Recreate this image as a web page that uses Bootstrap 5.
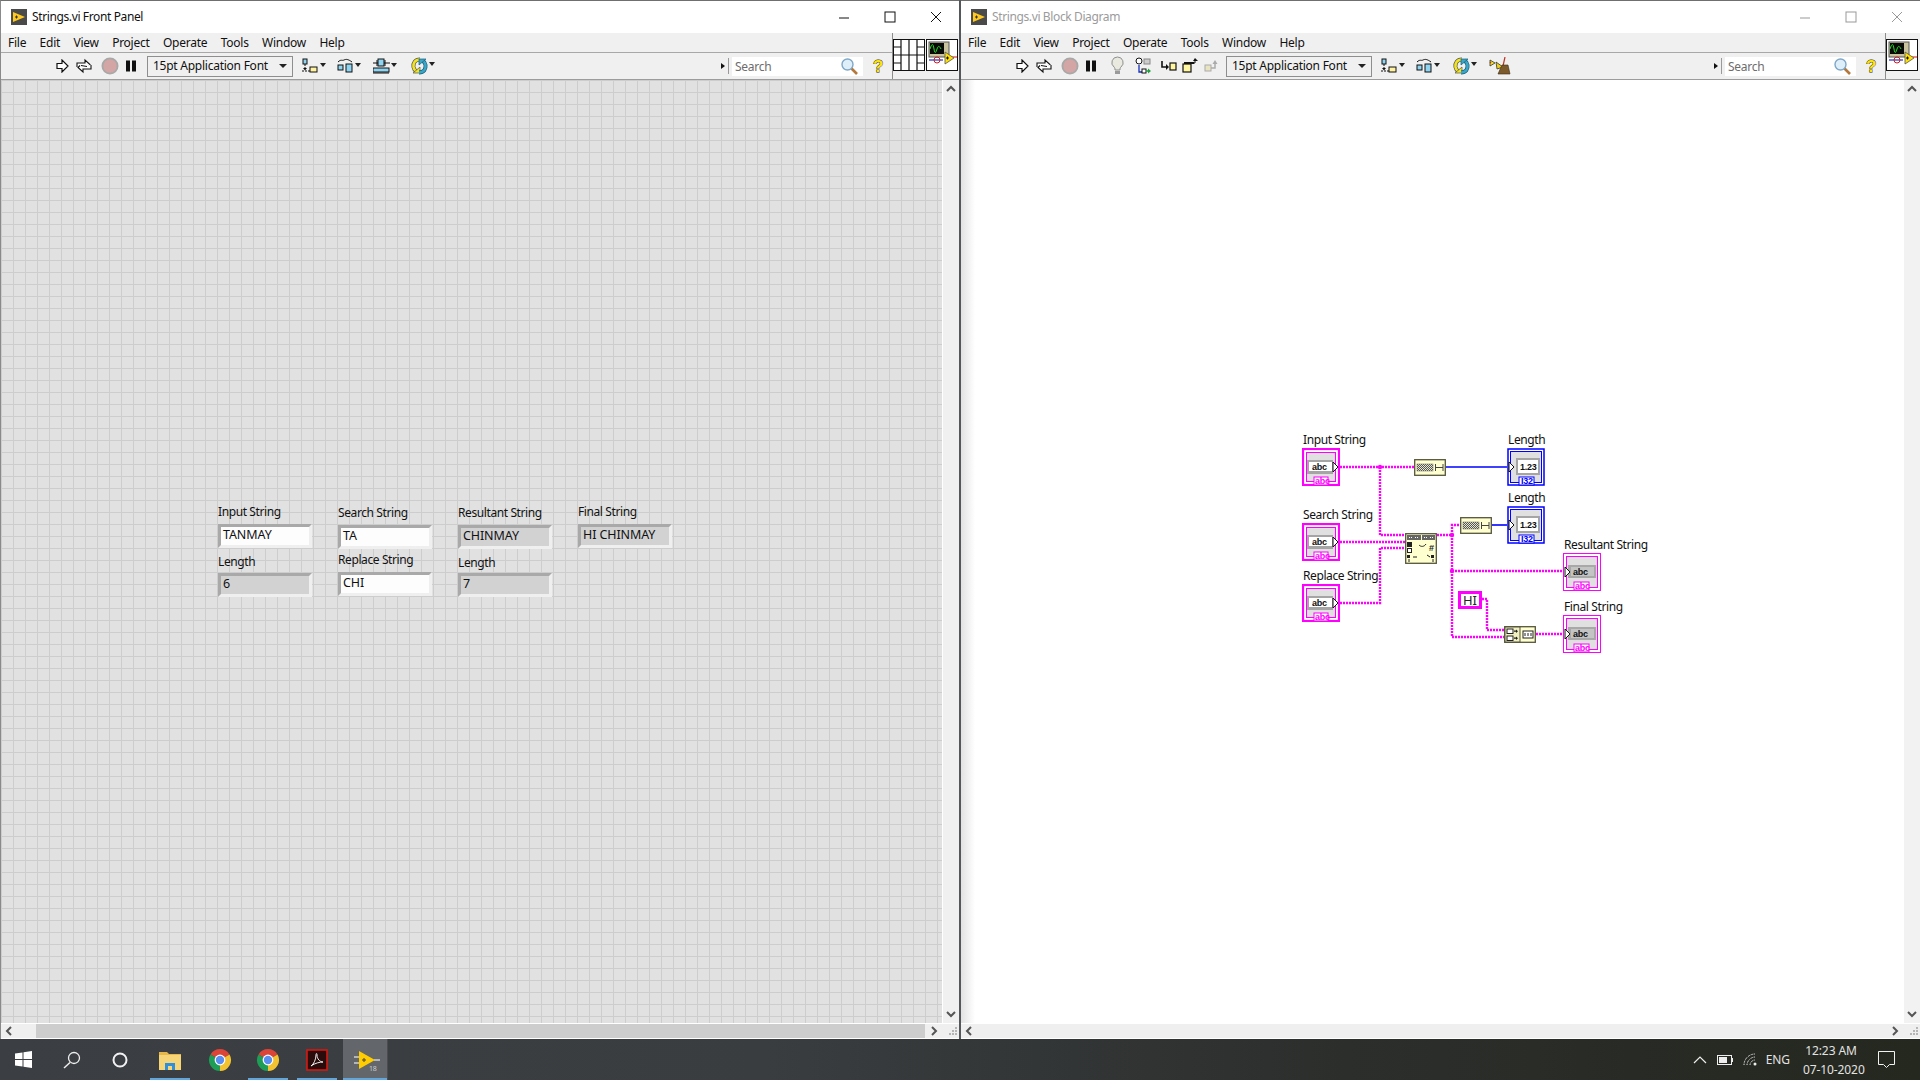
<!DOCTYPE html>
<html lang="en">
<head>
<meta charset="utf-8">
<title>Strings.vi</title>
<link href="https://cdn.jsdelivr.net/npm/bootstrap@5.3.0/dist/css/bootstrap.min.css" rel="stylesheet">
<style>
html,body{margin:0;height:1080px;width:1920px;overflow:hidden;background:#fff;}
body{font-family:"Noto Sans","Open Sans",sans-serif;font-size:12px;color:#111;letter-spacing:-.25px;}
.sprite{position:absolute;width:0;height:0;}
.desk{height:1039px;}
.lv-win{height:1039px;border-top:1px solid #6f6f6f;background:#f0f0f0;}
.win-a{width:959px;border-left:1px solid #8a8a8a;}
.win-b{width:959px;}
.split{width:2px;height:1039px;background:#55585a;}
.ttl{height:32px;background:#fff;padding-left:10px;font-size:12px;letter-spacing:-.38px;}
.ttl .ttl-txt{margin-left:5px;}
.dim{color:#9b9b9b;}
.wbtn{width:46px;text-align:center;}
.wbtn svg{display:block;margin:auto;}
.hdr{height:46px;}
.menu-row{height:20px;background:#f0f0f0;border-bottom:1px solid #a8a8a8;padding-left:7px;gap:13.4px;line-height:19px;}
.tool-row{height:26px;background:#f0f0f0;padding-left:55px;padding-right:7px;}
.pane-box{border-left:1px solid #8c8c8c;background:#f0f0f0;padding-top:6px;}
.pane-a{width:67px;}
.pane-b{width:35px;}
.hdr-line{height:1px;background:#9c9c9c;}
.font-pick{height:21px;border:1px solid #8e8e8e;background:#f0f0f0;padding:0 5px 0 5px;line-height:18px;}
.w146{width:146px;}
.search-box{height:19px;width:131px;background:#fff;color:#6d6d6d;padding-left:3px;line-height:18px;margin-top:1px;}
.me5{margin-right:5px}
.me2px{margin-right:2px}
.mid{flex:1 1 auto;min-height:0;}
.canvas-a{position:relative;background-color:#e1e1e1;
 background-image:linear-gradient(#cdcdcd 1px,transparent 1px),linear-gradient(90deg,#cdcdcd 1px,transparent 1px);
 background-size:12px 12px;background-position:0 0;}
.canvas-b{position:relative;background:linear-gradient(90deg,#e2e2e2,#fff 14px);}
.vbar{width:17px;background:#f0f0f0;border-left:1px solid #fff;padding:5px 0;}
.vbar-b{background:#f2f2f2;}
.hbar{height:16px;background:#efefef;border-top:1px solid #fff;border-bottom:1px solid #fff;}
.hbar-end{width:35px;}
.hbar-thumb{background:#cdcdcd;width:889px;height:100%;}
.lbl{position:absolute;white-space:nowrap;line-height:16px;letter-spacing:-.4px;}
.fld{position:absolute;width:94px;height:24px;border:3px solid;border-color:#a9a9a9 #efefef #efefef #a9a9a9;padding-left:2px;font-size:12.5px;line-height:15px;white-space:nowrap;letter-spacing:-.1px;}
.f-w{background:#fdfdfd;}
.f-g{background:#d2d2d2;}
.x1{left:217px}.x2{left:337px}.x3{left:457px}.x4{left:577px}
.ly1{top:424px}.ly2{top:425px}.ly3{top:474px}.ly4{top:472px}.ly5{top:475px}
.fy1{top:444px}.fy2{top:445px}.fy3{top:493px}.fy4{top:492px}
.diagram{position:absolute;left:329px;top:345px;width:380px;height:240px;}
.diagram text{font-family:"Noto Sans",sans-serif;}
.t-lab{font-size:12px;fill:#111;letter-spacing:-.4px;}
.t-mono{font-family:"Liberation Sans",sans-serif !important;font-size:9px;font-weight:700;}
.taskbar{height:41px;background:linear-gradient(90deg,#3b3e42 0,#3a3d40 40%,#2b2e2b 70%,#25281f 100%);color:#e2e2e2;position:relative;}
.tb-item{width:48px;height:41px;position:relative;}
.tb-start{width:46px;}
.tb-item.act{width:45px;padding-left:3px;background:#63666a;border-right:1px solid #4a4c50;}
.tb-under::after{content:"";position:absolute;left:4px;right:4px;bottom:0;height:2px;background:#63a6dc;}
.act.tb-under::after{left:0;right:0;}
.tray{font-size:12px;letter-spacing:-.1px;}
.clock{text-align:center;line-height:19px;width:56px;white-space:nowrap;}
.ms1px{margin-left:1px}.ms2{margin-left:2px}.ms5{margin-left:5px}.ms6{margin-left:6px}.ms7{margin-left:7px}.ms8{margin-left:8px}.ms9{margin-left:9px}.ms10{margin-left:10px}.ms11{margin-left:11px}.ms12{margin-left:12px}.ms13{margin-left:13px}.ms14{margin-left:14px}.ms19{margin-left:19px}
.tray-end{width:25px}
.qmark{font:700 17px "Liberation Sans",sans-serif;fill:#ffe600;stroke:#222;stroke-width:.8;paint-order:stroke;}
</style>
</head>
<body>
<svg class="sprite" aria-hidden="true">
<defs>
<pattern id="hatch" width="2" height="2" patternUnits="userSpaceOnUse"><rect width="2" height="2" fill="#e8e8d0"/><rect width="1" height="1" fill="#555"/><rect x="1" y="1" width="1" height="1" fill="#555"/></pattern>
<symbol id="i-run" viewBox="0 0 13 14"><polygon points="1,4.5 6,4.5 6,1 12,7 6,13 6,9.5 1,9.5" fill="#fff" stroke="#111" stroke-width="1.2"/></symbol>
<symbol id="i-rc" viewBox="0 0 18 16"><path d="M2 9V5h8V2l5 4.5-2 2" fill="#fff" stroke="#111" stroke-width="1.1"/><path d="M16 7v4H8v3L3 9.5l2-2" fill="#fff" stroke="#111" stroke-width="1.1"/><path d="M6 7.5l6 1" stroke="#111"/></symbol>
<symbol id="i-abort" viewBox="0 0 18 18"><circle cx="9" cy="9" r="7.6" fill="#d3a5a5" stroke="#a8a8a8" stroke-width="1.8"/></symbol>
<symbol id="i-pause" viewBox="0 0 10 12"><rect width="4" height="11" y=".5" fill="#111"/><rect x="6" y=".5" width="4" height="11" fill="#111"/></symbol>
<symbol id="i-bulb" viewBox="0 0 15 20"><path d="M7.5 1a5.6 5.6 0 0 0-3.500 10c.8.7 1 1.500 1 3h5c0-1.500.2-2.300 1-3a5.600 5.600 0 0 0-3.500-10z" fill="#e9e9e0" stroke="#8e8e8e"/><rect x="5" y="15" width="5" height="3" fill="#9a9a9a"/></symbol>
<symbol id="i-retain" viewBox="0 0 16 18"><circle cx="4" cy="4" r="3" fill="#fff" stroke="#111"/><rect x="9" y="2" width="6" height="5" fill="#ccc" stroke="#888"/><path d="M4 8v7h4" fill="none" stroke="#1230c0" stroke-width="1.300"/><rect x="7" y="12" width="4" height="4" fill="#fff" stroke="#111"/><path d="M11 14h3" stroke="#22a040" stroke-width="1.500"/><path d="M13 11.500l3 2.500-3 2.500z" fill="#22a040"/></symbol>
<symbol id="i-into" viewBox="0 0 16 14"><path d="M1 2v6h5" fill="none" stroke="#111" stroke-width="1.600"/><path d="M5 5l3 3-3 3z" fill="#111"/><rect x="9" y="4" width="6" height="7" fill="#fff6a0" stroke="#111" stroke-width="1.200"/></symbol>
<symbol id="i-over" viewBox="0 0 16 16"><rect x="1" y="6" width="8" height="8" fill="#fff6a0" stroke="#111" stroke-width="1.200"/><rect x="2" y="4" width="10" height="2" fill="#111"/><path d="M12 5h1V2" stroke="#111" fill="none"/><path d="M11 3l2-3 3 3z" fill="#111"/></symbol>
<symbol id="i-out" viewBox="0 0 16 14"><rect x="1" y="6" width="6" height="6" fill="#e9e4c0" stroke="#aaa"/><path d="M7 9h4V4" fill="none" stroke="#aaa" stroke-width="1.500"/><path d="M8.500 5l2.500-4 2.500 4z" fill="#aaa"/></symbol>
<symbol id="i-align" viewBox="0 0 24 16"><rect x="1" y="1" width="4" height="5" fill="#8fd4f0" stroke="#111"/><path d="M3 6v6M0 13h15" stroke="#111" stroke-dasharray="2 1"/><path d="M1 10l2 2.500L5 10z" fill="#111"/><rect x="8" y="9" width="7" height="5" fill="#fff2a0" stroke="#111"/><path d="M18 5h6l-3 4z" fill="#222"/></symbol>
<symbol id="i-dist" viewBox="0 0 24 16"><path d="M1 4c3-3 4-1 6-2s4-1 8 2" fill="none" stroke="#111"/><rect x="1" y="7" width="5" height="5" fill="#8fd4f0" stroke="#111"/><rect x="9" y="6" width="6" height="8" fill="#8fd4f0" stroke="#111"/><path d="M18 5h6l-3 4z" fill="#222"/></symbol>
<symbol id="i-size" viewBox="0 0 24 16"><path d="M0 5h5M11 5h6M4 2v6M12 2v6" stroke="#111"/><rect x="5" y="1" width="6" height="7" fill="#8fd4f0" stroke="#111"/><rect x="0" y="10" width="16" height="4" fill="#8fd4f0" stroke="#111"/><path d="M0 15h16" stroke="#111"/><path d="M18 5h6l-3 4z" fill="#222"/></symbol>
<symbol id="i-reorder" viewBox="0 0 24 18"><path d="M9 2.500C4 2.500 2 6 2.500 10c.3 2 1.500 3.500 3 4.500" fill="none" stroke="#555" stroke-width="4"/><path d="M9 2.500C4 2.500 2 6 2.500 10c.3 2 1.500 3.500 3 4.500" fill="none" stroke="#f4e41e" stroke-width="2.600"/><path d="M2 16h7v-6z" fill="#f4e41e" stroke="#555" stroke-width=".7"/><path d="M8 15.500c5 0 7-3.500 6.500-7.500-.3-2-1.500-3.500-3-4.500" fill="none" stroke="#1a5f78" stroke-width="4"/><path d="M8 15.500c5 0 7-3.500 6.500-7.500-.3-2-1.500-3.500-3-4.500" fill="none" stroke="#3aa6c8" stroke-width="2.600"/><path d="M15 2H8v6z" fill="#3aa6c8" stroke="#1a5f78" stroke-width=".7"/><path d="M18 5h6l-3 4z" fill="#222"/></symbol>
<symbol id="i-clean" viewBox="0 0 22 18"><path d="M1 3l5 3-5 3z" fill="#f0e020" stroke="#333" stroke-width=".8"/><path d="M7 5l7 5-6 2z" fill="#f0d010" stroke="#333" stroke-width=".8"/><path d="M1 5l1 1M16 0l-2 9" stroke="#c03020" stroke-width="1.200"/><path d="M13 8l6 0 2 9H9z" fill="#7c5a2c" stroke="#3c2a12" stroke-width=".6"/></symbol>
<symbol id="i-mag" viewBox="0 0 17 17"><path d="M10 10l6 6" stroke="#b5773a" stroke-width="2.600"/><circle cx="6.500" cy="6.500" r="5.500" fill="#dfeffa" stroke="#7fa8c8" stroke-width="1.400"/></symbol>
<symbol id="i-help" viewBox="0 0 13 18"><text x="1" y="15" class="qmark">?</text></symbol>
<symbol id="i-tri" viewBox="0 0 9 16"><path d="M0 5l4 3-4 3z" fill="#111"/><path d="M7.500 0v16" stroke="#9a9a9a"/></symbol>
<symbol id="i-conn" viewBox="0 0 32 32"><rect x=".5" y=".5" width="31" height="31" fill="#fff" stroke="#111"/><path d="M8 1v30M16 1v30M24 1v30M1 8h7M1 16h7M1 24h7M24 8h7M24 16h7M24 24h7M8 16h16" stroke="#111" stroke-width="1.200" fill="none"/></symbol>
<symbol id="i-vi" viewBox="0 0 32 32"><rect x=".5" y=".5" width="31" height="31" fill="#fff" stroke="#111"/><rect x="3" y="3" width="20" height="15" fill="#c9c3a0" stroke="#555"/><rect x="4" y="4" width="14" height="11" fill="#0a0a0a"/><path d="M4 10c2-6 3-6 4 0s2 3 3 0 2-4 4 0" stroke="#1ee01e" fill="none"/><path d="M3 21h14" stroke="#1e30d0" stroke-width="1.200"/><circle cx="11" cy="21" r="3" fill="none" stroke="#d02020"/><path d="M19 18h12" stroke="#e01010"/><path d="M19 13l9 6-9 6z" fill="#ffe000" stroke="#555" stroke-width=".8"/><path d="M20 19h3M21.500 17.500v3" stroke="#111"/></symbol>
<symbol id="i-lv" viewBox="0 0 16 16"><rect width="16" height="16" fill="#4a4a4a"/><path d="M2 3l12 5-12 5z" fill="#ffc81e"/><path d="M4 8h3M5.500 6.500v3" stroke="#333"/></symbol>
<symbol id="i-chrome" viewBox="0 0 24 24"><path d="M12 12L2.470 6.500A11 11 0 0 1 21.530 6.500z" fill="#db4437"/><path d="M12 12L21.530 6.500A11 11 0 0 1 12 23z" fill="#f2c230"/><path d="M12 12L12 23A11 11 0 0 1 2.470 6.500z" fill="#1e9d56"/><circle cx="12" cy="12" r="5.400" fill="#fff"/><circle cx="12" cy="12" r="4.200" fill="#5a8ef0"/></symbol>
<symbol id="t-ctl" viewBox="0 0 38 38"><rect x="1" y="1" width="36" height="36" fill="#fff" stroke="#f0f" stroke-width="2.200"/><rect x="4.500" y="4.500" width="29" height="29" fill="#e0e0e0" stroke="#f0f"/><rect x="5" y="12" width="26" height="14" fill="#a5a5a5"/><rect x="7" y="14" width="23" height="9" fill="#fff"/><text x="10" y="22" class="t-mono" fill="#111">abc</text><path d="M31 14l5 5-5 5z" fill="#fff" stroke="#111"/><rect x="12" y="29" width="14" height="8" fill="#fff" stroke="#f0f"/><text x="13" y="36" class="t-mono" fill="#f0f">abc</text></symbol>
<symbol id="t-ind" viewBox="0 0 38 38"><rect x=".5" y=".5" width="37" height="37" fill="#fff" stroke="#f0f"/><rect x="3.500" y="3.500" width="31" height="31" fill="#e0e0e0" stroke="#f0f"/><rect x="5" y="12" width="28" height="13" fill="#a8a8a8"/><rect x="8" y="14" width="23" height="9" fill="#c4c4c4"/><text x="10" y="22" class="t-mono" fill="#111">abc</text><path d="M2 14l5 5-5 5z" fill="#fff" stroke="#111"/><rect x="11" y="29" width="15" height="8" fill="#fff" stroke="#f0f"/><text x="12" y="36" class="t-mono" fill="#f0f">abc</text></symbol>
<symbol id="t-num" viewBox="0 0 38 38"><rect x="1" y="1" width="36" height="36" fill="#fff" stroke="#00f" stroke-width="1.500"/><rect x="3.500" y="3.500" width="31" height="31" fill="#e0e0e0" stroke="#00f"/><rect x="9" y="10" width="24" height="17" fill="#a5a5a5"/><rect x="11" y="12" width="20" height="13" fill="#fff"/><text x="13" y="22" class="t-mono" fill="#111" font-weight="400">1.23</text><path d="M2 14l5 5-5 5z" fill="#fff" stroke="#111"/><rect x="12" y="29" width="15" height="8" fill="#fff" stroke="#00f"/><text x="14" y="36" class="t-mono" fill="#00f">I32</text></symbol>
<symbol id="n-len" viewBox="0 0 32 17"><rect x=".7" y=".7" width="30.600" height="15.600" fill="#ffffd0" stroke="#55553a" stroke-width="1.300"/><rect x="3" y="5" width="16" height="7" fill="url(#hatch)" stroke="#666" stroke-width=".5"/><path d="M21.500 5v7M29 5v7M21.500 8.500h7.500" stroke="#444"/></symbol>
<symbol id="n-rep" viewBox="0 0 32 31"><rect x=".7" y=".7" width="30.600" height="29.600" fill="#ffffd0" stroke="#55553a" stroke-width="1.300"/><rect x="2" y="2" width="14" height="5" fill="#666"/><rect x="17" y="2" width="13" height="5" fill="#666"/><path d="M4 4.500h3M10 4.500h3M19 4.500h3M25 4.500h3" stroke="#fff" stroke-dasharray="1 1"/><rect x="2" y="9" width="5" height="5" fill="#222"/><rect x="2.500" y="15.500" width="4" height="4" fill="#fff" stroke="#222"/><rect x="2" y="22" width="3" height="3" fill="#222"/><rect x="26" y="22" width="3" height="3" fill="#222"/><path d="M14 12c2 2 5 2 7-1M8 24h4M22 22l3 2M4 26v3M28 26v3" stroke="#222" fill="none"/><text x="24" y="18" class="t-mono" fill="#222">#</text></symbol>
<symbol id="n-con" viewBox="0 0 32 17"><rect x=".7" y=".7" width="30.600" height="15.600" fill="#ffffd0" stroke="#55553a" stroke-width="1.300"/><rect x="1" y="1" width="15" height="15" fill="#f0f0c0" stroke="#55553a"/><rect x="3" y="3" width="6" height="4.500" fill="#fff" stroke="#222"/><rect x="3" y="10" width="6" height="4.500" fill="#fff" stroke="#222"/><path d="M10 5.200h3M10 12.200h3" stroke="#222" stroke-width="1.300"/><path d="M12 3.500l2 1.700-2 1.700zM12 10.500l2 1.700-2 1.700z" fill="#222"/><rect x="19" y="5" width="10" height="7" fill="#fff" stroke="#222"/><path d="M21 7v3M24 7v3M27 7v3" stroke="#222"/></symbol>
</defs>
</svg>

<div class="desk d-flex">
  <!-- FRONT PANEL -->
  <section class="lv-win win-a d-flex flex-column">
    <div class="ttl d-flex align-items-center">
      <svg width="16" height="16"><use href="#i-lv"/></svg>
      <span class="ttl-txt">Strings.vi Front Panel</span>
      <div class="ms-auto d-flex">
        <div class="wbtn"><svg width="12" height="12"><path d="M1 7h10" stroke="#111"/></svg></div>
        <div class="wbtn"><svg width="12" height="12"><rect x="1" y="1" width="10" height="10" fill="none" stroke="#111"/></svg></div>
        <div class="wbtn"><svg width="12" height="12"><path d="M1 1l10 10M11 1L1 11" stroke="#111"/></svg></div>
      </div>
    </div>
    <div class="hdr d-flex">
      <div class="flex-grow-1 d-flex flex-column">
        <div class="menu-row d-flex"><span>File</span><span>Edit</span><span>View</span><span>Project</span><span>Operate</span><span>Tools</span><span>Window</span><span>Help</span></div>
        <div class="tool-row d-flex align-items-center">
          <svg width="13" height="14"><use href="#i-run"/></svg>
          <svg class="ms6" width="18" height="16"><use href="#i-rc"/></svg>
          <svg class="ms8" width="18" height="18"><use href="#i-abort"/></svg>
          <svg class="ms7" width="10" height="12"><use href="#i-pause"/></svg>
          <div class="font-pick w146 ms11 d-flex justify-content-between align-items-center"><span>15pt Application Font</span><svg width="8" height="5"><path d="M0 0h8L4 4z" fill="#222"/></svg></div>
          <svg class="ms9" width="24" height="16"><use href="#i-align"/></svg>
          <svg class="ms11" width="24" height="16"><use href="#i-dist"/></svg>
          <svg class="ms12" width="24" height="16"><use href="#i-size"/></svg>
          <svg class="ms14" width="24" height="18"><use href="#i-reorder"/></svg>
          <div class="ms-auto d-flex align-items-center">
            <svg width="9" height="16"><use href="#i-tri"/></svg>
            <div class="search-box ms2 d-flex justify-content-between align-items-center"><span>Search</span><svg class="me5" width="17" height="17"><use href="#i-mag"/></svg></div>
            <svg class="ms9" width="13" height="18"><use href="#i-help"/></svg>
          </div>
        </div>
      </div>
      <div class="pane-box pane-a d-flex align-items-start">
        <svg width="32" height="32"><use href="#i-conn"/></svg>
        <svg class="ms1px" width="32" height="32"><use href="#i-vi"/></svg>
      </div>
    </div>
    <div class="hdr-line"></div>
    <div class="mid d-flex">
      <div class="canvas-a flex-grow-1">
        <span class="lbl x1 ly1">Input String</span><div class="fld f-w x1 fy1">TANMAY</div>
        <span class="lbl x1 ly3">Length</span><div class="fld f-g x1 fy3">6</div>
        <span class="lbl x2 ly2">Search String</span><div class="fld f-w x2 fy2">TA</div>
        <span class="lbl x2 ly4">Replace String</span><div class="fld f-w x2 fy4">CHI</div>
        <span class="lbl x3 ly2">Resultant String</span><div class="fld f-g x3 fy2">CHINMAY</div>
        <span class="lbl x3 ly5">Length</span><div class="fld f-g x3 fy3">7</div>
        <span class="lbl x4 ly1">Final String</span><div class="fld f-g x4 fy1">HI CHINMAY</div>
      </div>
      <div class="vbar d-flex flex-column justify-content-between align-items-center">
        <svg width="10" height="7"><path d="M1 6l4-4 4 4" fill="none" stroke="#555" stroke-width="2"/></svg>
        <svg width="10" height="7"><path d="M1 1l4 4 4-4" fill="none" stroke="#555" stroke-width="2"/></svg>
      </div>
    </div>
    <div class="hbar d-flex align-items-center">
      <div class="hbar-end d-flex ps-1 align-items-center"><svg width="8" height="10"><path d="M6 1L2 5l4 4" fill="none" stroke="#555" stroke-width="2"/></svg></div>
      <div class="hbar-thumb"></div>
      <div class="ms-auto d-flex align-items-center"><svg width="8" height="10"><path d="M2 1l4 4-4 4" fill="none" stroke="#555" stroke-width="2"/></svg><svg class="ms9 me2px" width="10" height="10"><path d="M8 1h2v2H8zM5 4h2v2H5zM8 4h2v2H8zM2 7h2v2H2zM5 7h2v2H5zM8 7h2v2H8z" fill="#b5b5b5"/></svg></div>
    </div>
  </section>
  <div class="split"></div>
  <!-- BLOCK DIAGRAM -->
  <section class="lv-win win-b d-flex flex-column">
    <div class="ttl d-flex align-items-center">
      <svg width="16" height="16"><use href="#i-lv"/></svg>
      <span class="ttl-txt dim">Strings.vi Block Diagram</span>
      <div class="ms-auto d-flex">
        <div class="wbtn"><svg width="12" height="12"><path d="M1 7h10" stroke="#999"/></svg></div>
        <div class="wbtn"><svg width="12" height="12"><rect x="1" y="1" width="10" height="10" fill="none" stroke="#999"/></svg></div>
        <div class="wbtn"><svg width="12" height="12"><path d="M1 1l10 10M11 1L1 11" stroke="#999"/></svg></div>
      </div>
    </div>
    <div class="hdr d-flex">
      <div class="flex-grow-1 d-flex flex-column">
        <div class="menu-row d-flex"><span>File</span><span>Edit</span><span>View</span><span>Project</span><span>Operate</span><span>Tools</span><span>Window</span><span>Help</span></div>
        <div class="tool-row d-flex align-items-center">
          <svg width="13" height="14"><use href="#i-run"/></svg>
          <svg class="ms6" width="18" height="16"><use href="#i-rc"/></svg>
          <svg class="ms8" width="18" height="18"><use href="#i-abort"/></svg>
          <svg class="ms7" width="10" height="12"><use href="#i-pause"/></svg>
          <svg class="ms14" width="15" height="20"><use href="#i-bulb"/></svg>
          <svg class="ms10" width="16" height="18"><use href="#i-retain"/></svg>
          <svg class="ms10" width="16" height="14"><use href="#i-into"/></svg>
          <svg class="ms5" width="16" height="16"><use href="#i-over"/></svg>
          <svg class="ms6" width="16" height="14"><use href="#i-out"/></svg>
          <div class="font-pick w146 ms6 d-flex justify-content-between align-items-center"><span>15pt Application Font</span><svg width="8" height="5"><path d="M0 0h8L4 4z" fill="#222"/></svg></div>
          <svg class="ms9" width="24" height="16"><use href="#i-align"/></svg>
          <svg class="ms11" width="24" height="16"><use href="#i-dist"/></svg>
          <svg class="ms13" width="24" height="18"><use href="#i-reorder"/></svg>
          <svg class="ms12" width="22" height="18"><use href="#i-clean"/></svg>
          <div class="ms-auto d-flex align-items-center">
            <svg width="9" height="16"><use href="#i-tri"/></svg>
            <div class="search-box ms2 d-flex justify-content-between align-items-center"><span>Search</span><svg class="me5" width="17" height="17"><use href="#i-mag"/></svg></div>
            <svg class="ms9" width="13" height="18"><use href="#i-help"/></svg>
          </div>
        </div>
      </div>
      <div class="pane-box pane-b">
        <svg width="32" height="32"><use href="#i-vi"/></svg>
      </div>
    </div>
    <div class="hdr-line"></div>
    <div class="mid d-flex">
      <div class="canvas-b flex-grow-1">
        <svg class="diagram" viewBox="1290 425 380 240">
          <g fill="none" stroke="#f0f" stroke-width="2.400" stroke-dasharray="2 1">
            <path d="M1340 467H1414"/>
            <path d="M1380 467V535H1405"/>
            <path d="M1340 542H1405"/>
            <path d="M1340 603H1380V548H1405"/>
            <path d="M1437 535H1452V525H1460"/>
            <path d="M1452 535V637H1504"/>
            <path d="M1452 571H1563"/>
            <path d="M1482 599H1487V630H1504"/>
            <path d="M1536 634H1563"/>
          </g>
          <g fill="none" stroke="#00f" stroke-width="1.600"><path d="M1446 467H1507"/><path d="M1492 525H1507"/></g>
          <g fill="#f0f"><circle cx="1380" cy="467" r="2.200"/><circle cx="1452" cy="535" r="2.200"/><circle cx="1452" cy="571" r="2.200"/></g>
          <use href="#t-ctl" x="1302" y="448" width="38" height="38"/>
          <use href="#t-ctl" x="1302" y="523" width="38" height="38"/>
          <use href="#t-ctl" x="1302" y="584" width="38" height="38"/>
          <use href="#t-num" x="1507" y="448" width="38" height="38"/>
          <use href="#t-num" x="1507" y="506" width="38" height="38"/>
          <use href="#t-ind" x="1563" y="553" width="38" height="38"/>
          <use href="#t-ind" x="1563" y="615" width="38" height="38"/>
          <use href="#n-len" x="1414" y="459" width="32" height="17"/>
          <use href="#n-len" x="1460" y="517" width="32" height="17"/>
          <use href="#n-rep" x="1405" y="533" width="32" height="31"/>
          <use href="#n-con" x="1504" y="626" width="32" height="17"/>
          <rect x="1459.500" y="592.500" width="21" height="15" fill="#fff" stroke="#f0f" stroke-width="3"/>
          <text x="1463" y="605" font-size="13" fill="#222">HI</text>
          <text class="t-lab" x="1303" y="444">Input String</text>
          <text class="t-lab" x="1303" y="519">Search String</text>
          <text class="t-lab" x="1303" y="580">Replace String</text>
          <text class="t-lab" x="1508" y="444">Length</text>
          <text class="t-lab" x="1508" y="502">Length</text>
          <text class="t-lab" x="1564" y="549">Resultant String</text>
          <text class="t-lab" x="1564" y="611">Final String</text>
        </svg>
      </div>
      <div class="vbar vbar-b d-flex flex-column justify-content-between align-items-center">
        <svg width="10" height="7"><path d="M1 6l4-4 4 4" fill="none" stroke="#555" stroke-width="2"/></svg>
        <svg width="10" height="7"><path d="M1 1l4 4 4-4" fill="none" stroke="#555" stroke-width="2"/></svg>
      </div>
    </div>
    <div class="hbar d-flex align-items-center">
      <div class="ps-1 d-flex align-items-center"><svg width="8" height="10"><path d="M6 1L2 5l4 4" fill="none" stroke="#555" stroke-width="2"/></svg></div>
      <div class="ms-auto d-flex align-items-center"><svg width="8" height="10"><path d="M2 1l4 4-4 4" fill="none" stroke="#555" stroke-width="2"/></svg><svg class="ms9 me2px" width="10" height="10"><path d="M8 1h2v2H8zM5 4h2v2H5zM8 4h2v2H8zM2 7h2v2H2zM5 7h2v2H5zM8 7h2v2H8z" fill="#b5b5b5"/></svg></div>
    </div>
  </section>
</div>

<footer class="taskbar d-flex align-items-center">
  <div class="tb-item tb-start d-flex align-items-center justify-content-center"><svg width="17" height="17"><path d="M0 2.500l7.500-1v6.500H0zM8.500 1.300L17 0v8H8.500zM0 9h7.500v6.500l-7.500-1zM8.500 9H17v8l-8.500-1.200z" fill="#fff"/></svg></div>
  <div class="tb-item ms2 d-flex align-items-center justify-content-center"><svg width="18" height="18"><circle cx="11" cy="7" r="5.500" fill="none" stroke="#eee" stroke-width="1.300"/><path d="M7 11.500L1 17" stroke="#eee" stroke-width="1.500"/></svg></div>
  <div class="tb-item d-flex align-items-center justify-content-center"><svg width="16" height="16"><circle cx="8" cy="8" r="6.500" fill="none" stroke="#f2f2f2" stroke-width="2"/></svg></div>
  <div class="tb-item tb-under ms2 d-flex align-items-center justify-content-center"><svg width="22" height="20"><path d="M0 2h8l2 2h12v16H0z" fill="#e6b84a"/><path d="M0 5h22v15H0z" fill="#f6d579"/><path d="M6 20v-7h10v7h-3v-4H9v4z" fill="#2f8fdc"/></svg></div>
  <div class="tb-item ms2 d-flex align-items-center justify-content-center"><svg width="24" height="24"><use href="#i-chrome"/></svg></div>
  <div class="tb-item tb-under d-flex align-items-center justify-content-center"><svg width="24" height="24"><use href="#i-chrome"/></svg></div>
  <div class="tb-item tb-under ms1px d-flex align-items-center justify-content-center"><svg width="22" height="22"><rect x="1" y="1" width="20" height="20" fill="#2a0c0c" stroke="#d81810" stroke-width="1.600"/><path d="M5 17c3-2 5-7 5-11 0-2 1-2 1 0 0 4 3 7 6 7-3 0-8 1-12 4z" fill="none" stroke="#eee"/></svg></div>
  <div class="tb-item act tb-under ms2 d-flex align-items-center justify-content-center"><svg width="26" height="24"><path d="M0 9h6M0 15h6M20 12h6" stroke="#cfcfcf" stroke-width="1.500"/><path d="M5 3l16 9-16 9z" fill="#ffcc00"/><path d="M8 12h4M10 10v4" stroke="#444"/><text x="15" y="23" font-size="7" fill="#ccc">18</text></svg></div>
  <div class="tray ms-auto d-flex align-items-center">
    <svg width="14" height="10"><path d="M1 8l6-6 6 6" fill="none" stroke="#eee" stroke-width="1.200"/></svg>
    <svg class="ms10" width="16" height="10"><rect x=".5" y=".5" width="14" height="9" fill="none" stroke="#eee"/><rect x="2" y="2" width="8" height="6" fill="#eee"/><rect x="15" y="3" width="1" height="4" fill="#eee"/></svg>
    <svg class="ms10" width="14" height="13"><path d="M1 12C1 6 6 1 12 1M4 12c0-4 4-8 8-8M7 12c0-2 2-5 5-5" fill="none" stroke="#ddd" stroke-dasharray="1 .6"/><circle cx="12" cy="11" r="1.500" fill="#eee"/></svg>
    <span class="ms9">ENG</span>
    <div class="clock ms13">12:23 AM<br>07-10-2020</div>
    <svg class="ms19" width="17" height="17"><path d="M.5.500h16v13h-5l-3 3-3-3h-5z" fill="none" stroke="#f2f2f2"/></svg>
    <div class="tray-end"></div>
  </div>
</footer>
</body>
</html>
